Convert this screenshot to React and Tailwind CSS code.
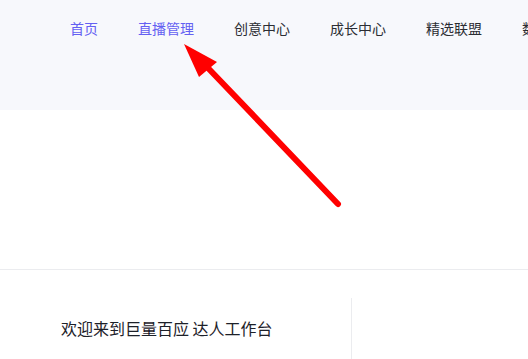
const navItems = ['首页', '直播管理', '创意中心', '成长中心', '精选联盟', '数据参谋'];

const Arrow = () => (
  <svg
    className="absolute left-0 top-0 pointer-events-none"
    width="528"
    height="359"
    viewBox="0 0 528 359"
  >
    <line x1="208" y1="68" x2="338" y2="204" stroke="#ff0000" strokeWidth="6" strokeLinecap="round" />
    <polygon points="184,44 217,62 199,77" fill="#ff0000" />
  </svg>
);

const App = () => {
  return (
    <div
      className="relative w-[528px] h-[359px] overflow-hidden bg-white"
      style={{ fontFamily: '"Noto Sans CJK SC", "Noto Sans", sans-serif' }}
    >
      <div className="h-[110px] bg-[#f7f8fc]">
        <nav className="flex gap-[40px] pl-[70px] pt-[19px] whitespace-nowrap text-[14px] leading-[18px]">
          {navItems.map((item, i) => (
            <span
              key={item}
              className={i < 2 ? 'text-[#6460f2]' : 'text-[#2b2d33]'}
            >
              {item}
            </span>
          ))}
        </nav>
      </div>

      <div className="h-[159px]"></div>

      <div className="border-t border-[#ebecef] flex">
        <div className="w-[351px] pt-[47px] pl-[61px]">
          <p className="text-[16px] leading-[22px] text-[#1d2129]">欢迎来到巨量百应 达人工作台</p>
        </div>
        <div className="mt-[28px] h-[80px] border-l border-[#ebecef]"></div>
      </div>

      <Arrow />
    </div>
  );
};

export default App;
